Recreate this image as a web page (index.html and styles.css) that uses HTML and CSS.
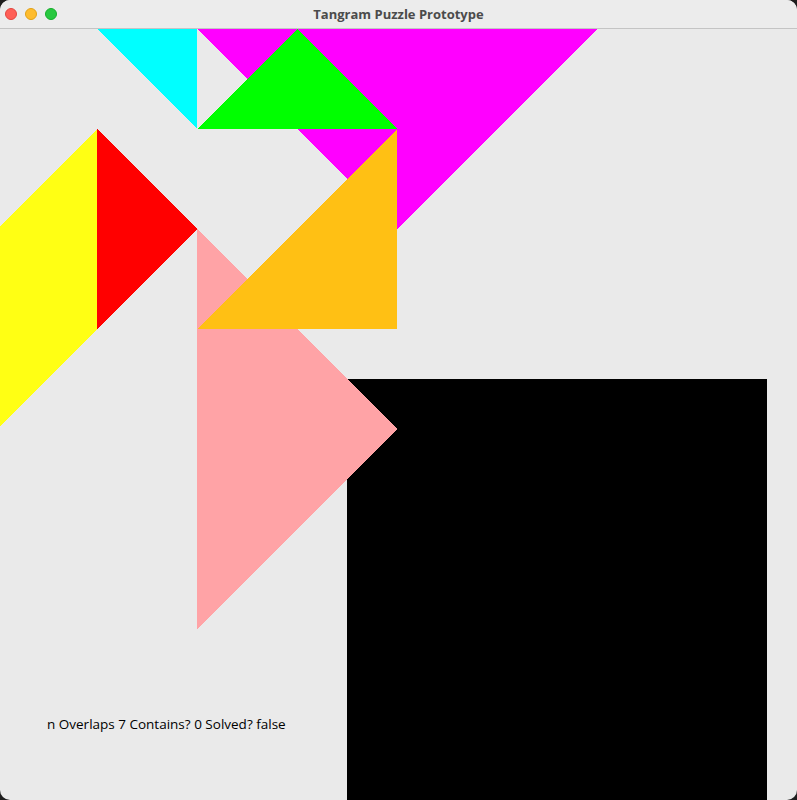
FILE: index.html
```html
<!DOCTYPE html>
<html>
<head>
<meta charset="utf-8">
<title>Tangram Puzzle Prototype</title>
<link rel="stylesheet" href="styles.css">
</head>
<body>
<div class="window">
  <header class="titlebar">
    <div class="lights">
      <span class="light close"></span>
      <span class="light min"></span>
      <span class="light max"></span>
    </div>
    <div class="title">Tangram Puzzle Prototype</div>
  </header>
  <main class="canvas">
    <svg class="board" viewBox="0 0 797 771" width="797" height="771" xmlns="http://www.w3.org/2000/svg">
      <rect x="347" y="350" width="420" height="421" fill="#000000"/>
      <polygon points="97,0 197,0 197,100" fill="#00ffff"/>
      <polygon points="197,0 597,0 397,200" fill="#ff00ff"/>
      <polygon points="297,0 397,100 197,100" fill="#00ff00"/>
      <polygon points="97,100 97,300 -3,400 -3,200" fill="#ffff14"/>
      <polygon points="97,100 197,200 97,300" fill="#ff0000"/>
      <polygon points="197,200 397,400 197,600" fill="#ffa3a6"/>
      <polygon points="397,100 397,300 197,300" fill="#ffc014"/>
      <text class="status" x="47" y="700">n Overlaps 7 Contains? 0 Solved? false</text>
    </svg>
  </main>
</div>
</body>
</html>
```
FILE: styles.css
```css
html, body {
  margin: 0;
  padding: 0;
  background: #1e1e1e;
}
.window {
  width: 797px;
  height: 800px;
  display: flex;
  flex-direction: column;
  background: #eaeaea;
  border-radius: 10px;
  overflow: hidden;
}
.titlebar {
  height: 28px;
  flex: 0 0 28px;
  background: #ececec;
  border-bottom: 1px solid #c4c4c4;
  display: flex;
  align-items: center;
  position: relative;
}
.lights {
  display: flex;
  gap: 8px;
  padding-left: 5px;
}
.light {
  width: 12px;
  height: 12px;
  border-radius: 50%;
  box-sizing: border-box;
}
.close { background: #ff5f57; border: 0.5px solid #e2463f; }
.min { background: #febc2e; border: 0.5px solid #e1a116; }
.max { background: #28c840; border: 0.5px solid #14ae2a; }
.title {
  position: absolute;
  left: 0;
  right: 0;
  text-align: center;
  font-family: "Open Sans", "Liberation Sans", sans-serif;
  font-weight: 700;
  font-size: 13px;
  color: #4b4b4b;
  top: 6px;
  line-height: 16px;
}
.canvas {
  flex: 1;
  overflow: hidden;
}
.board {
  display: block;
  shape-rendering: crispEdges;
}
.status {
  font-family: "Open Sans", "Liberation Sans", sans-serif;
  font-size: 13.5px;
  font-weight: 500;
  fill: #000000;
}
```
